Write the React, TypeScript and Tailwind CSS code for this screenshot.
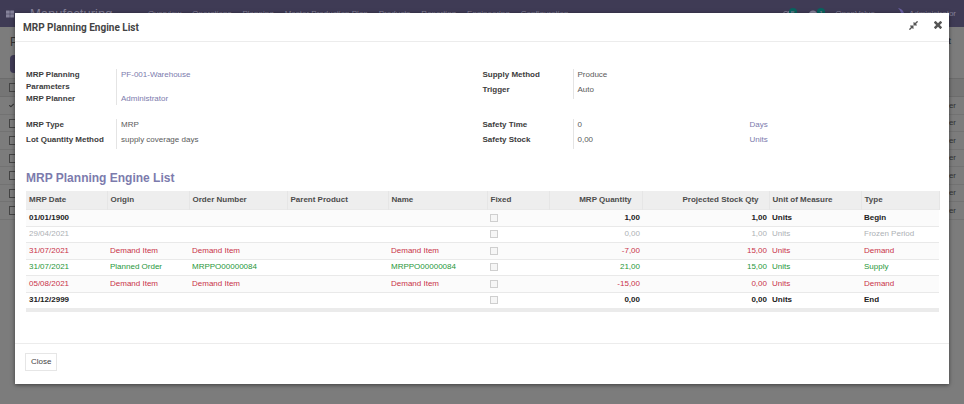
import { FaThLarge, FaComment, FaRedo, FaCheck } from "react-icons/fa";

const navItems = [
  "Overview",
  "Operations",
  "Planning",
  "Master Production Plan",
  "Products",
  "Reporting",
  "Engineering",
  "Configuration",
];

const backgroundRows = [1, 2, 3, 4, 5, 6, 7];

type Tone = "bold" | "muted" | "danger" | "success";

const tones: Record<Tone, string> = {
  bold: "font-bold text-[#222222]",
  muted: "text-[#adb1b5]",
  danger: "text-[#c9334a]",
  success: "text-[#28973a]",
};

type Line = {
  date: string;
  origin: string;
  order: string;
  name: string;
  qty: string;
  stock: string;
  type: string;
  tone: Tone;
};

const lines: Line[] = [
  { date: "01/01/1900", origin: "", order: "", name: "", qty: "1,00", stock: "1,00", type: "Begin", tone: "bold" },
  { date: "29/04/2021", origin: "", order: "", name: "", qty: "0,00", stock: "1,00", type: "Frozen Period", tone: "muted" },
  { date: "31/07/2021", origin: "Demand Item", order: "Demand Item", name: "Demand Item", qty: "-7,00", stock: "15,00", type: "Demand", tone: "danger" },
  { date: "31/07/2021", origin: "Planned Order", order: "MRPPO00000084", name: "MRPPO00000084", qty: "21,00", stock: "15,00", type: "Supply", tone: "success" },
  { date: "05/08/2021", origin: "Demand Item", order: "Demand Item", name: "Demand Item", qty: "-15,00", stock: "0,00", type: "Demand", tone: "danger" },
  { date: "31/12/2999", origin: "", order: "", name: "", qty: "0,00", stock: "0,00", type: "End", tone: "bold" },
];

type FieldData = { label: string; value: string; link?: boolean; unit?: string; tight?: boolean };

function FieldGroup({ fields }: { fields: FieldData[] }) {
  return (
    <dl className="flex-1">
      {fields.map((f) => (
        <div key={f.label} className={`flex ${f.tight ? "" : "pb-[3px]"}`}>
          <dt className="w-[90px] shrink-0 pr-2 font-bold whitespace-pre-line text-[#3c3c3c]">{f.label}</dt>
          <dd className={`flex flex-1 border-l border-[#e4e4e4] pl-1 text-[#5a5a5a] ${f.tight ? "items-start" : "-mb-[3px]"}`}>
            <span className="w-[172px]">
              {f.link ? <a href="#" className="text-[#7c7bad]">{f.value}</a> : f.value}
            </span>
            {f.unit && <a href="#" className="text-[#7c7bad]">{f.unit}</a>}
          </dd>
        </div>
      ))}
    </dl>
  );
}

function CompressIcon() {
  return (
    <svg viewBox="140 140 1512 1512" className="size-[9px] fill-current" aria-hidden="true">
      <path d="M896 960v448q0 26-19 45t-45 19-45-19l-144-144-332 332q-10 10-23 10t-23-10l-114-114q-10-10-10-23t10-23l332-332-144-144q-19-19-19-45t19-45 45-19h448q26 0 45 19t19 45zm755-672q0 13-10 23l-332 332 144 144q19 19 19 45t-19 45-45 19h-448q-26 0-45-19t-19-45v-448q0-26 19-45t45-19 45 19l144 144 332-332q10-10 23-10t23 10l114 114q10 10 10 23z" />
    </svg>
  );
}

function CloseIcon() {
  return (
    <svg viewBox="300 366 1192 1192" className="size-2 fill-current" aria-hidden="true">
      <path d="M1490 1322q0 40-28 68l-136 136q-28 28-68 28t-68-28l-294-294-294 294q-28 28-68 28t-68-28l-136-136q-28-28-28-68t28-68l294-294-294-294q-28-28-28-68t28-68l136-136q28-28 68-28t68 28l294 294 294-294q28-28 68-28t68 28l136 136q28 28 28 68t-28 68l-294 294 294 294q28 28 28 68z" />
    </svg>
  );
}

function Background() {
  return (
    <div aria-hidden="true" className="h-screen overflow-hidden bg-[#7c7c7c] text-[#333333]">
      <header className="flex h-[27px] items-center overflow-hidden bg-[#3f3b55] pl-1.5 pr-2 text-[8px] whitespace-nowrap text-[#85829a]">
        <FaThLarge className="size-2" />
        <span className="ml-4 w-[118px] text-[13px]">Manufacturing</span>
        <nav className="flex gap-[11px]">
          {navItems.map((item) => <span key={item}>{item}</span>)}
        </nav>
        <div className="ml-auto flex items-center">
          <FaRedo className="size-1.5" />
          <span className="mr-3 rounded-sm bg-[#08635f] px-0.5">5</span>
          <FaComment className="size-2" />
          <span className="mr-2.5 rounded-sm bg-[#08635f] px-0.5">1</span>
          <span className="mr-5">OpenValue</span>
          <svg viewBox="0 0 10 14" className="mr-1 h-3.5 w-2.5">
            <path d="M3 1C8 2 10 6 9 10L4 12C7 9 7 5 3 1Z" fill="#6a5fa3" />
          </svg>
          <span>Administrator</span>
        </div>
      </header>
      <div className="flex h-[52px] justify-between border-b border-[#6c6c6c] pl-2.5">
        <div>
          <div className="h-7 pt-1.5 text-[12px]">P</div>
          <div className="h-[18px] w-10 rounded-sm bg-[#3f3b55]" />
        </div>
        <div className="w-4 pt-2 text-[9px] font-bold">t</div>
      </div>
      <div className="flex h-[18px] items-center border-b border-[#6c6c6c] bg-[#757575] pl-[9px]">
        <span className="size-[9px] border border-[#444444]" />
      </div>
      {backgroundRows.map((row) => (
        <div key={row} className="flex h-[18px] items-center justify-between border-b border-[#727272] pl-[9px] pr-2 text-[8px] odd:h-[17px]">
          {row === 1 ? <FaCheck className="size-[5px]" /> : <span className="size-[9px] border border-[#444444]" />}
          <span>Planner</span>
        </div>
      ))}
    </div>
  );
}

export default function App() {
  return (
    <div className="relative font-['Liberation_Sans',Arial,sans-serif]">
      <Background />
      <div className="absolute inset-0 px-[15px] pt-[13px]">
        <section role="dialog" aria-labelledby="dialog-title" className="bg-white text-[8px] leading-3 shadow-[0_1px_4px_rgba(0,0,0,0.5)]">
          <header className="flex h-[29px] items-center justify-between border-b border-[#ececec] pl-2 pr-[7px] text-[#444444]">
            <h1 id="dialog-title" className="pt-0.5 font-['Roboto','Liberation_Sans',sans-serif] text-[10px] font-bold">MRP Planning Engine List</h1>
            <div className="flex items-center gap-4 pb-1 text-[#555555]">
              <button type="button" aria-label="Restore size"><CompressIcon /></button>
              <button type="button" aria-label="Close dialog"><CloseIcon /></button>
            </div>
          </header>

          <main className="pl-[11px] pr-2.5 pt-[27px] pb-[31px]">
            <div className="flex pb-3.5">
              <FieldGroup
                fields={[
                  { label: "MRP Planning\nParameters", value: "PF-001-Warehouse", link: true, tight: true },
                  { label: "MRP Planner", value: "Administrator", link: true, tight: true },
                ]}
              />
              <FieldGroup
                fields={[
                  { label: "Supply Method", value: "Produce" },
                  { label: "Trigger", value: "Auto" },
                ]}
              />
            </div>
            <div className="flex pb-[21px]">
              <FieldGroup
                fields={[
                  { label: "MRP Type", value: "MRP" },
                  { label: "Lot Quantity Method", value: "supply coverage days" },
                ]}
              />
              <FieldGroup
                fields={[
                  { label: "Safety Time", value: "0", unit: "Days" },
                  { label: "Safety Stock", value: "0,00", unit: "Units" },
                ]}
              />
            </div>

            <h2 className="pb-[5px] text-[12px] leading-4 font-bold text-[#7c7bad]">MRP Planning Engine List</h2>
            <table className="w-full table-fixed border-collapse text-left whitespace-nowrap">
              <colgroup>
                <col className="w-[81px]" />
                <col className="w-[82px]" />
                <col className="w-[98px]" />
                <col className="w-[101px]" />
                <col className="w-[99px]" />
                <col className="w-[62px]" />
                <col className="w-[93px]" />
                <col className="w-[127px]" />
                <col className="w-[92px]" />
                <col className="w-[78px]" />
              </colgroup>
              <thead>
                <tr className="h-[18px] bg-[#eeeeee] text-[#4c4c4c] [&>th]:border-r [&>th]:border-[#e6e6e6] [&>th]:px-[3px] [&>th]:py-0">
                  <th>MRP Date</th>
                  <th>Origin</th>
                  <th>Order Number</th>
                  <th>Parent Product</th>
                  <th>Name</th>
                  <th>Fixed</th>
                  <th><div className="pr-[7px] text-right">MRP Quantity</div></th>
                  <th><div className="pr-[7px] text-right">Projected Stock Qty</div></th>
                  <th>Unit of Measure</th>
                  <th>Type</th>
                </tr>
              </thead>
              <tbody>
                {lines.map((line, i) => (
                  <tr
                    key={i}
                    className={`h-[17px] border-t border-[#e9e9e9] even:h-4 odd:bg-[#fbfbfb] [&>td]:py-0 [&>td]:pr-[2px] [&>td]:pl-[3px] ${tones[line.tone]}`}
                  >
                    <td>{line.date}</td>
                    <td>{line.origin}</td>
                    <td>{line.order}</td>
                    <td />
                    <td>{line.name}</td>
                    <td>
                      <input
                        type="checkbox"
                        disabled
                        aria-label={`Fixed ${line.date}`}
                        className="block size-2 appearance-none border border-[#cfcfcf] bg-[#f6f6f6]"
                      />
                    </td>
                    <td className="text-right">{line.qty}</td>
                    <td className="text-right">{line.stock}</td>
                    <td>Units</td>
                    <td>{line.type}</td>
                  </tr>
                ))}
              </tbody>
            </table>
            <div className="h-1 bg-[#ebebeb]" />
          </main>

          <footer className="border-t border-[#ececec] px-2.5 pt-[9px] pb-[13px]">
            <button type="button" className="h-[18px] border border-[#e6e6e6] px-[5px] text-[#444444]">Close</button>
          </footer>
        </section>
      </div>
    </div>
  );
}
